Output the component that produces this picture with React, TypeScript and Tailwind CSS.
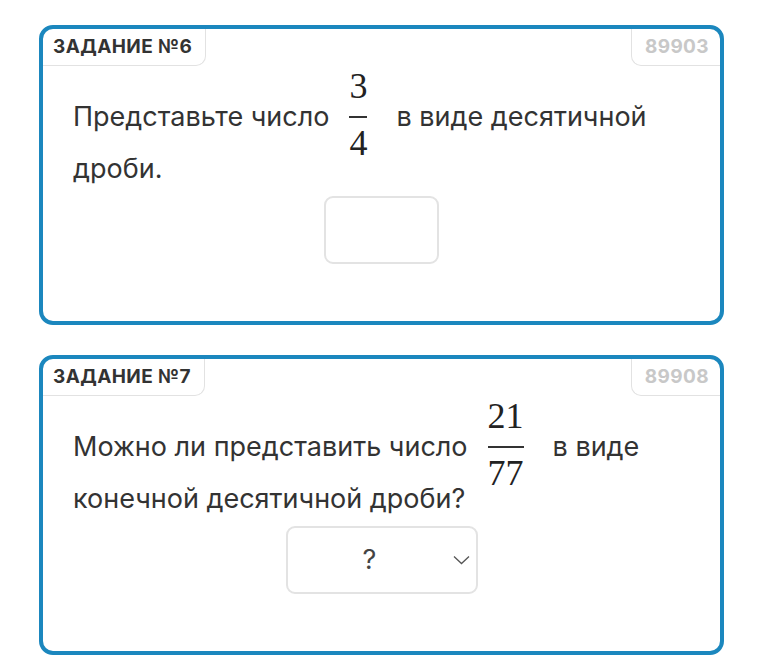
import React from "react";

const sans = { fontFamily: "Inter, 'Noto Sans', sans-serif" };

// fraction is lifted so its bar sits on the math axis; negative margins keep the line box at 52px
const Frac = ({ top, bottom }: { top: string; bottom: string }) => (
  <span className="my-[-24px] ml-[20px] mr-[29px] inline-flex flex-col items-center align-[28px] font-['Liberation_Serif',serif] text-[36px] leading-none text-[#222]">
    <span className="pb-[12px]">{top}</span>
    <span className="h-[2px] w-full bg-[#333]" />
    <span className="pt-[7px]">{bottom}</span>
  </span>
);

const TaskCard = ({
  num,
  id,
  children,
}: {
  num: number;
  id: string;
  children: React.ReactNode;
}) => (
  <div className="flex h-[300px] flex-col rounded-[14px] border-4 border-[#1b87be] bg-white">
    <div className="flex items-start justify-between">
      <div className="flex h-[37px] items-center rounded-br-[10px] border-b border-r border-[#e2e2e2] pl-[10px] pr-[13px] text-[19px] font-bold tracking-[0.4px] text-[#333]">
        ЗАДАНИЕ №{num}
      </div>
      <div className="flex h-[37px] items-center rounded-bl-[10px] border-b border-l border-[#e2e2e2] pl-[13px] pr-[11px] text-[19px] font-bold tracking-[0.4px] text-[#c8c8c8]">
        {id}
      </div>
    </div>
    {children}
  </div>
);

export default function App() {
  return (
    <div className="min-h-screen bg-white px-[39px] pt-[25px]" style={sans}>
      <div className="flex w-[685px] flex-col gap-[30px]">
        <TaskCard num={6} id="89903">
          <p className="px-[30px] pt-[25px] text-[27px] leading-[52px] text-[#333]">
            Представьте число<Frac top="3" bottom="4" />в виде десятичной дроби.
          </p>
          <div className="mt-[1px] flex justify-center">
            <div className="h-[68px] w-[115px] rounded-[9px] border-2 border-[#e3e3e3]" />
          </div>
        </TaskCard>
        <TaskCard num={7} id="89908">
          <p className="px-[30px] pt-[25px] text-[27px] leading-[52px] text-[#333]">
            Можно ли представить число<Frac top="21" bottom="77" />в виде конечной десятичной дроби?
          </p>
          <div className="mt-[1px] flex justify-center">
            <div className="relative flex h-[68px] w-[192px] items-center rounded-[9px] border-2 border-[#e3e3e3]">
              <span className="w-full pr-[24px] text-center text-[27px] text-[#444]">?</span>
              <svg
                className="absolute right-[6px] top-1/2 -translate-y-1/2"
                width="17"
                height="10"
                viewBox="0 0 17 10"
                fill="none"
              >
                <path d="M1 1.5 8.5 8.5 16 1.5" stroke="#555" strokeWidth="1.3" />
              </svg>
            </div>
          </div>
        </TaskCard>
      </div>
    </div>
  );
}
